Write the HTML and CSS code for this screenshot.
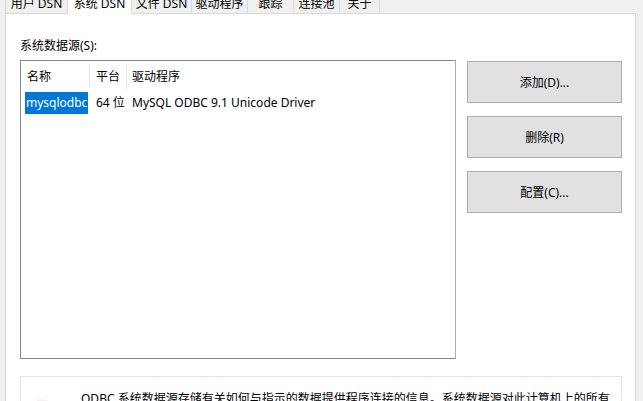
FILE: index.html
```html
<!DOCTYPE html>
<html>
<head>
    <title>ODBC 数据源管理程序</title>
    <link rel="stylesheet" href="styles.css">
</head>
<body>

<div class="tabs">
    <div class="tab w63">用户 DSN</div>
    <div class="tab w64 active">系统 DSN</div>
    <div class="tab w60">文件 DSN</div>
    <div class="tab w56">驱动程序</div>
    <div class="tab w46">跟踪</div>
    <div class="tab w46">连接池</div>
    <div class="tab w40">关于</div>
</div>

<div class="panel">
    <div class="label">系统数据源(S):</div>

    <div class="main">
        <div class="list">
            <div class="row head">
                <div class="col name">名称</div>
                <div class="col platform">平台</div>
                <div class="col driver">驱动程序</div>
            </div>
            <div class="row">
                <div class="col name"><span class="selected">mysqlodbc</span></div>
                <div class="col platform">64 位</div>
                <div class="col driver">MySQL ODBC 9.1 Unicode Driver</div>
            </div>
        </div>

        <div class="buttons">
            <button class="button">添加(D)...</button>
            <button class="button">删除(R)</button>
            <button class="button">配置(C)...</button>
        </div>
    </div>

    <div class="info">
        <div class="info-icon"></div>
        <p>ODBC 系统数据源存储有关如何与指示的数据提供程序连接的信息。系统数据源对此计算机上的所有用户可见，包括 NT 服务。</p>
    </div>
</div>

</body>
</html>
```

FILE: styles.css
```css
body {
    margin: 0;
    background: #f0f0f0;
    font-family: "Noto Sans", "Noto Sans CJK SC", sans-serif;
    font-size: 12px;
    color: #000;
    overflow: hidden;
    height: 401px;
}

/* tab strip, scrolled so only the lower half shows */
.tabs {
    display: flex;
    margin-top: -7px;
    padding-left: 5px;
    height: 21px;
}

.tab {
    line-height: 19px;
    border: 1px solid #d9d9d9;
    border-left: none;
    background: #f0f0f0;
    white-space: nowrap;
    text-align: center;
    box-sizing: border-box;
    font-size: 12px;
}

.tab:first-child {
    border-left: 1px solid #d9d9d9;
}

.tab.active {
    background: #fff;
    border-bottom-color: #fff;
}

.w63 { width: 63px; }
.w64 { width: 64px; }
.w60 { width: 60px; }
.w56 { width: 56px; }
.w46 { width: 46px; }
.w40 { width: 40px; }

.panel {
    margin-left: 5px;
    margin-top: -1px;
    width: 631px;
    height: 420px;
    background: #fff;
    border: 1px solid #d9d9d9;
    padding-left: 14px;
    box-sizing: border-box;
}

.label {
    margin-top: 23px;
    height: 18px;
    line-height: 18px;
}

.main {
    display: flex;
    margin-top: 5px;
}

.list {
    width: 436px;
    height: 299px;
    border: 1px solid #828790;
    border-right-color: #adadad;
    box-sizing: border-box;
    padding: 3px 0 0 4px;
}

.row {
    display: flex;
    height: 22px;
    line-height: 22px;
}

.row.head {
    height: 25px;
    line-height: 25px;
    margin-bottom: 3px;
}

.col {
    box-sizing: border-box;
    white-space: nowrap;
}

.col.name { width: 65px; padding-left: 2px; }
.col.platform { width: 37px; padding-left: 6px; }
.col.driver { padding-left: 5px; }

.row.head .col.name,
.row.head .col.platform {
    border-right: 1px solid #e5e5e5;
}

.selected {
    display: inline-block;
    background: #0078d7;
    color: #fff;
    margin-left: -2px;
    padding: 0 1px;
}

.buttons {
    display: flex;
    flex-direction: column;
    gap: 13px;
    margin-left: 11px;
    margin-top: 1px;
}

.button {
    width: 155px;
    height: 42px;
    background: #e1e1e1;
    border: 1px solid #adadad;
    font-family: inherit;
    font-size: 12px;
    color: #000;
    padding: 0;
}

.info {
    display: flex;
    margin-top: 17px;
    width: 602px;
    height: 80px;
    border: 1px solid #e3e3e3;
    box-sizing: border-box;
    padding: 12px 0 0 10px;
}

.info-icon {
    width: 22px;
    height: 22px;
    margin-top: 10px;
    border-radius: 50%;
    background: #f6f0f2;
}

.info p {
    margin: 0 0 0 28px;
    width: 535px;
    line-height: 20px;
}
```
